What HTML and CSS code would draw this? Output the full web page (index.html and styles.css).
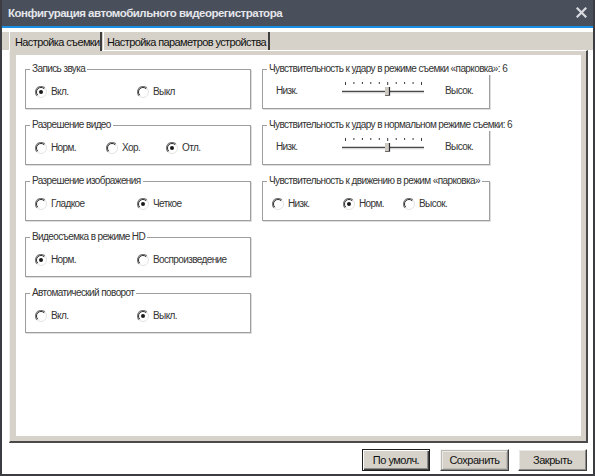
FILE: index.html
```html
<!DOCTYPE html>
<html lang="ru">
<head>
<meta charset="utf-8">
<title>Конфигурация автомобильного видеорегистратора</title>
<link rel="stylesheet" href="styles.css">
</head>
<body>
<svg class="defs" width="0" height="0" aria-hidden="true">
  <defs>
    <symbol id="radio-off" viewBox="0 0 12 12">
      <circle cx="6" cy="6" r="5" fill="#fff"/>
      <path d="M2.1 9.9 A5.5 5.5 0 0 1 9.9 2.1" fill="none" stroke="#7a7a7a" stroke-width="1.2"/>
      <path d="M2.8 9.2 A4.5 4.5 0 0 1 9.2 2.8" fill="none" stroke="#2e2e2e" stroke-width="1"/>
      <path d="M9.9 2.1 A5.5 5.5 0 0 1 2.1 9.9" fill="none" stroke="#e4e2de" stroke-width="1"/>
    </symbol>
    <symbol id="radio-on" viewBox="0 0 12 12">
      <circle cx="6" cy="6" r="5" fill="#fff"/>
      <path d="M2.1 9.9 A5.5 5.5 0 0 1 9.9 2.1" fill="none" stroke="#7a7a7a" stroke-width="1.2"/>
      <path d="M2.8 9.2 A4.5 4.5 0 0 1 9.2 2.8" fill="none" stroke="#2e2e2e" stroke-width="1"/>
      <path d="M9.9 2.1 A5.5 5.5 0 0 1 2.1 9.9" fill="none" stroke="#e4e2de" stroke-width="1"/>
      <circle cx="6" cy="6" r="2" fill="#1a1a1a"/>
    </symbol>
    <symbol id="slider" viewBox="0 0 86 16">
      <g stroke="#3a3a3a" stroke-width="1">
        <line x1="3.5" y1="1" x2="3.5" y2="4"/>
        <line x1="11.9" y1="1" x2="11.9" y2="3"/>
        <line x1="20.4" y1="1" x2="20.4" y2="3"/>
        <line x1="28.8" y1="1" x2="28.8" y2="3"/>
        <line x1="37.3" y1="1" x2="37.3" y2="3"/>
        <line x1="45.7" y1="1" x2="45.7" y2="4"/>
        <line x1="54.2" y1="1" x2="54.2" y2="3"/>
        <line x1="62.6" y1="1" x2="62.6" y2="3"/>
        <line x1="71.1" y1="1" x2="71.1" y2="3"/>
        <line x1="79.5" y1="1" x2="79.5" y2="4"/>
      </g>
      <line x1="0" y1="10.5" x2="82" y2="10.5" stroke="#4a4a4a" stroke-width="1.4"/>
      <line x1="0" y1="11.8" x2="82" y2="11.8" stroke="#d8d8d8" stroke-width="1"/>
      <rect x="43" y="6" width="5" height="9" fill="#cdc9c1"/>
      <line x1="47.5" y1="6" x2="47.5" y2="15" stroke="#2a2a2a" stroke-width="1.2"/>
      <line x1="43" y1="14.5" x2="48" y2="14.5" stroke="#6a6a6a" stroke-width="1"/>
    </symbol>
  </defs>
</svg>

<div class="window">
  <div class="titlebar">
    <span class="title">Конфигурация автомобильного видеорегистратора</span>
    <svg class="close" width="11" height="11" viewBox="0 0 11 11" aria-label="Закрыть">
      <path d="M1.5 1.5 L9.5 9.5 M9.5 1.5 L1.5 9.5" stroke="#d9dbe0" stroke-width="2.2" stroke-linecap="square"/>
    </svg>
  </div>

  <div class="body">
    <div class="tabs">
      <div class="tab tab-active">Настройка съемки</div>
      <div class="tab tab-second">Настройка параметров устройства</div>
    </div>

    <div class="panelwrap">
      <div class="panel">
        <div class="content">
          <div class="col col-left">
            <div class="group">
              <div class="legend">Запись звука</div>
              <div class="options two">
                <label class="opt"><svg class="radio"><use href="#radio-on"/></svg>Вкл.</label>
                <label class="opt"><svg class="radio"><use href="#radio-off"/></svg>Выкл</label>
              </div>
            </div>
            <div class="group">
              <div class="legend">Разрешение видео</div>
              <div class="options three">
                <label class="opt"><svg class="radio"><use href="#radio-off"/></svg>Норм.</label>
                <label class="opt"><svg class="radio"><use href="#radio-off"/></svg>Хор.</label>
                <label class="opt"><svg class="radio"><use href="#radio-on"/></svg>Отл.</label>
              </div>
            </div>
            <div class="group">
              <div class="legend">Разрешение изображения</div>
              <div class="options two">
                <label class="opt"><svg class="radio"><use href="#radio-off"/></svg>Гладкое</label>
                <label class="opt"><svg class="radio"><use href="#radio-on"/></svg>Четкое</label>
              </div>
            </div>
            <div class="group">
              <div class="legend">Видеосъемка в режиме HD</div>
              <div class="options two">
                <label class="opt"><svg class="radio"><use href="#radio-on"/></svg>Норм.</label>
                <label class="opt"><svg class="radio"><use href="#radio-off"/></svg>Воспроизведение</label>
              </div>
            </div>
            <div class="group">
              <div class="legend">Автоматический поворот</div>
              <div class="options two">
                <label class="opt"><svg class="radio"><use href="#radio-off"/></svg>Вкл.</label>
                <label class="opt"><svg class="radio"><use href="#radio-on"/></svg>Выкл.</label>
              </div>
            </div>
          </div>

          <div class="col col-right">
            <div class="group">
              <div class="legend">Чувствительность к удару в режиме съемки «парковка»: 6</div>
              <div class="slider-row">
                <span class="slabel">Низк.</span>
                <svg class="slider"><use href="#slider"/></svg>
                <span class="slabel">Высок.</span>
              </div>
            </div>
            <div class="group">
              <div class="legend">Чувствительность к удару в нормальном режиме съемки: 6</div>
              <div class="slider-row">
                <span class="slabel">Низк.</span>
                <svg class="slider"><use href="#slider"/></svg>
                <span class="slabel">Высок.</span>
              </div>
            </div>
            <div class="group">
              <div class="legend">Чувствительность к движению в режим «парковка»</div>
              <div class="options three">
                <label class="opt"><svg class="radio"><use href="#radio-off"/></svg>Низк.</label>
                <label class="opt"><svg class="radio"><use href="#radio-on"/></svg>Норм.</label>
                <label class="opt"><svg class="radio"><use href="#radio-off"/></svg>Высок.</label>
              </div>
            </div>
          </div>
        </div>
      </div>
    </div>

    <div class="buttons">
      <button class="btn btn-default">По умолч.</button>
      <button class="btn btn-focus">Сохранить</button>
      <button class="btn btn-close">Закрыть</button>
    </div>
  </div>
</div>
</body>
</html>
```

FILE: styles.css
```css
* { box-sizing: border-box; }

html, body {
  margin: 0;
  padding: 0;
  width: 595px;
  height: 476px;
  overflow: hidden;
  background: #fff;
  font-family: "Liberation Sans", Arial, sans-serif;
}

.defs { position: absolute; width: 0; height: 0; overflow: hidden; }

.window {
  width: 595px;
  height: 476px;
  border-left: 2px solid #3b3d42;
  border-right: 2px solid #3b3d42;
  border-bottom: 2px solid #3b3d42;
  background: #fff;
  display: flex;
  flex-direction: column;
}

.titlebar {
  height: 28px;
  background: #4a4f5c;
  border-bottom: 2px solid #1b8fe4;
  display: flex;
  align-items: center;
  justify-content: space-between;
  padding: 0 6px 1px 6px;
}

.title {
  color: #e4e6ea;
  font-weight: bold;
  font-size: 11.5px;
  letter-spacing: -0.5px;
}

.close { display: block; }

.body {
  flex: 1;
  padding-top: 4px;
  display: flex;
  flex-direction: column;
}

.tabs {
  height: 18px;
  background: #d6d2ca;
  padding-left: 7px;
  display: flex;
  align-items: stretch;
  gap: 1px;
}

.tab {
  font-size: 11px;
  letter-spacing: -0.6px;
  color: #111;
  line-height: 16px;
  padding-top: 2px;
  border-left: 1px solid #fff;
  border-right: 2px solid #3e3e3e;
  background: #d6d2ca;
  white-space: nowrap;
  overflow: hidden;
}

.tab-active {
  width: 93px;
  padding-left: 5px;
  margin-bottom: -1px;
  position: relative;
  z-index: 1;
}

.tab-second {
  width: 167px;
  padding-left: 3px;
}

.panelwrap {
  padding-left: 7px;
}

.panel {
  width: 579px;
  height: 393px;
  background: #d6d2ca;
  border-top: 1px solid #fff;
  border-left: 1px solid #f2f0ec;
  border-right: 2px solid #4a4a4a;
  border-bottom: 2px solid #4a4a4a;
  padding: 4px 5px 5px 6px;
}

.content {
  width: 565px;
  height: 381px;
  background: #fff;
  display: flex;
  gap: 11px;
  padding: 8px 0 0 9px;
  align-items: flex-start;
}

.col {
  display: flex;
  flex-direction: column;
  gap: 10px;
}

.col-left { width: 226px; }
.col-right { width: 228px; }

.group {
  height: 40px;
  margin-top: 6px;
  border: 1px solid #9e9e9e;
  box-shadow: 1px 1px 0 #dedede;
}

.legend {
  width: max-content;
  white-space: nowrap;
  margin: -7px 0 0 4px;
  padding: 0 2px;
  background: #fff;
  font-size: 10px;
  letter-spacing: -0.6px;
  line-height: 12px;
  color: #333;
}

.options {
  display: grid;
  margin-top: 11px;
  padding-left: 9px;
}

.options.two { grid-template-columns: 102px auto; }
.options.three { grid-template-columns: 71px 60px auto; }

.opt {
  display: flex;
  align-items: center;
  gap: 4px;
  font-size: 10px;
  letter-spacing: -0.6px;
  line-height: 12px;
  color: #333;
  white-space: nowrap;
}

.radio {
  width: 12px;
  height: 12px;
  flex: none;
  display: block;
}

.slider-row {
  display: grid;
  grid-template-columns: 66px 103px auto;
  margin-top: 6px;
  padding-left: 13px;
}

.slabel {
  font-size: 10px;
  letter-spacing: -0.6px;
  line-height: 12px;
  padding-top: 4px;
  color: #333;
}

.slider {
  width: 86px;
  height: 16px;
  display: block;
}

.buttons {
  display: flex;
  justify-content: flex-end;
  padding: 6px 6px 0 0;
}

.btn {
  height: 22px;
  font-family: "Liberation Sans", Arial, sans-serif;
  font-size: 11px;
  letter-spacing: -0.5px;
  color: #111;
  background: #d6d2ca;
  padding: 0;
  margin: 0;
  border: 1px solid;
  border-color: #fff #404040 #404040 #fff;
  box-shadow: inset -1px -1px 0 #8a8a8a, inset 1px 1px 0 #ebe9e5;
}

.btn-default {
  width: 68px;
  margin-right: 10px;
  border: 1px solid #1e1e1e;
  box-shadow: inset 1px 1px 0 #fff, inset -1px -1px 0 #404040, inset -2px -2px 0 #8a8a8a;
}

.btn-focus {
  width: 69px;
  margin-right: 9px;
  border-color: #f4f4f4 #404040 #404040 #f4f4f4;
  box-shadow: inset -1px -1px 0 #8a8a8a, inset 1px 1px 0 #bdbab4, inset 2px 2px 0 #ebe9e5, inset -2px -2px 0 #bdbab4;
}

.btn-close {
  width: 69px;
}
```
